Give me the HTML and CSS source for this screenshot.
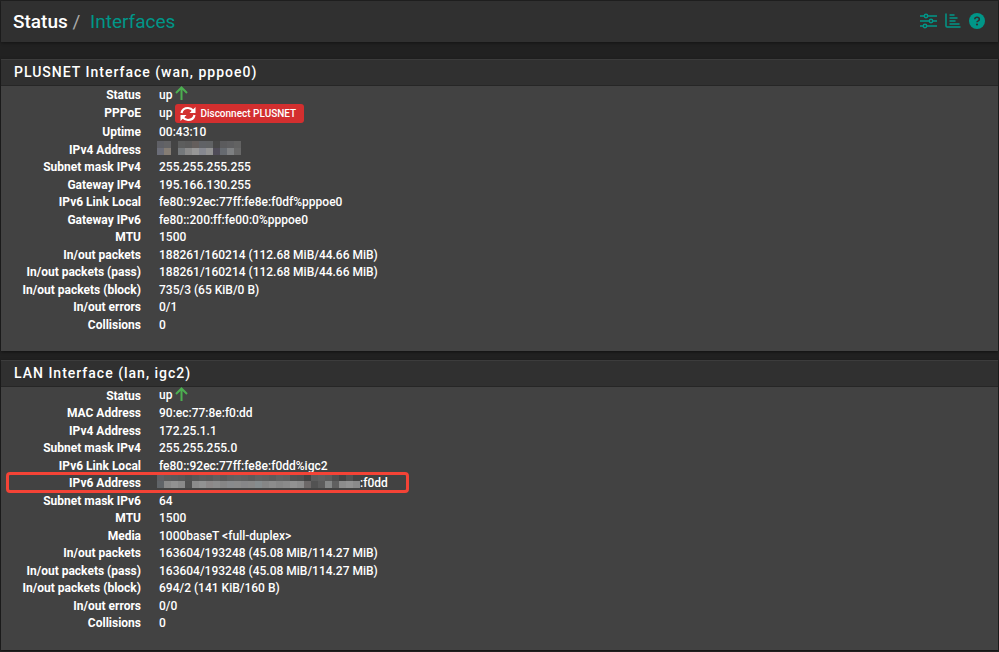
FILE: index.html
```
<!DOCTYPE html>
<html lang="en">
<head>
    <meta charset="UTF-8">
    <meta name="viewport" content="width=device-width, initial-scale=1.0">
    <title>Status: Interfaces</title>
    <link rel="stylesheet" href="styles.css">
</head>
<body>
    <header class="header">
        <h1 class="breadcrumb">Status <span class="slash">/</span> <a href="#">Interfaces</a></h1>
        <nav class="header-icons">
            <a href="#" aria-label="Settings">
                <svg width="17" height="16" viewBox="0 0 17 16" fill="none" stroke="currentColor" stroke-width="1.5">
                    <path d="M0 3h4M8 3h9M0 8h9M13 8h4M0 13h3M7 13h10"/>
                    <circle cx="6" cy="3" r="1.7"/>
                    <circle cx="11" cy="8" r="1.7"/>
                    <circle cx="5" cy="13" r="1.7"/>
                </svg>
            </a>
            <a href="#" aria-label="Graph">
                <svg width="16" height="16" viewBox="0 0 16 16" fill="none" stroke="currentColor" stroke-width="1.5" stroke-linecap="round">
                    <path d="M1 1v12q0 1 1 1h13M5 2h4M5 5h7M5 8h5M5 11h9"/>
                </svg>
            </a>
            <a href="#" aria-label="Help">
                <svg width="16" height="16" viewBox="0 0 16 16">
                    <circle cx="8" cy="8" r="8" fill="currentColor"/>
                    <path d="M5.8 6.2Q5.9 4.3 8 4.3Q10.3 4.3 10.3 6.2Q10.3 7.3 9.1 7.9Q8 8.4 8 9.3" fill="none" stroke="#303030" stroke-width="1.6"/>
                    <circle cx="8" cy="11.5" r="1.1" fill="#303030"/>
                </svg>
            </a>
        </nav>
    </header>

    <section class="panel">
        <h2 class="panel-heading">PLUSNET Interface (wan, pppoe0)</h2>
        <dl class="info info-wan">
            <dt>Status</dt>
            <dd class="up">up
                <svg class="arrow" width="13" height="14" viewBox="0 0 13 14"><path d="M6.500 14V1.500M1 7L6.500 1.500L12 7"/></svg>
            </dd>
            <dt>PPPoE</dt>
            <dd class="up">up
                <button type="button" class="btn-danger">
                    <svg width="16" height="16" viewBox="0 0 16 16" fill="none" stroke="#fff" stroke-width="2.2">
                        <path d="M1.500 7Q2.500 2 8 2Q11 2 13.500 5M14.500 9Q13.500 14 8 14Q5 14 2.500 11"/>
                        <path d="M15.500 1v6h-6zM.5 15V9h6z" fill="#fff" stroke="none"/>
                    </svg>
                    Disconnect PLUSNET
                </button>
            </dd>
            <dt>Uptime</dt>
            <dd>00:43:10</dd>
            <dt>IPv4 Address</dt>
            <dd><span class="mosaic" data-cells="5f6066 636365 444444 5c5d5d 5a5a5a 645e5c 606266 606264 474747 5b5b5d 5e5e60 626262|6b6d78 857d74 444444 74787b 8a8a8a 979797 868890 929292 4f4c58 666a70 7e8082 686868"></span></dd>
            <dt>Subnet mask IPv4</dt>
            <dd>255.255.255.255</dd>
            <dt>Gateway IPv4</dt>
            <dd>195.166.130.255</dd>
            <dt>IPv6 Link Local</dt>
            <dd>fe80::92ec:77ff:fe8e:f0df%pppoe0</dd>
            <dt>Gateway IPv6</dt>
            <dd>fe80::200:ff:fe00:0%pppoe0</dd>
            <dt>MTU</dt>
            <dd>1500</dd>
            <dt>In/out packets</dt>
            <dd>188261/160214 (112.68 MiB/44.66 MiB)</dd>
            <dt>In/out packets (pass)</dt>
            <dd>188261/160214 (112.68 MiB/44.66 MiB)</dd>
            <dt>In/out packets (block)</dt>
            <dd>735/3 (65 KiB/0 B)</dd>
            <dt>In/out errors</dt>
            <dd>0/1</dd>
            <dt>Collisions</dt>
            <dd>0</dd>
        </dl>
    </section>

    <section class="panel">
        <h2 class="panel-heading">LAN Interface (lan, igc2)</h2>
        <dl class="info">
            <dt>Status</dt>
            <dd class="up">up
                <svg class="arrow" width="13" height="14" viewBox="0 0 13 14"><path d="M6.500 14V1.500M1 7L6.500 1.500L12 7"/></svg>
            </dd>
            <dt>MAC Address</dt>
            <dd>90:ec:77:8e:f0:dd</dd>
            <dt>IPv4 Address</dt>
            <dd>172.25.1.1</dd>
            <dt>Subnet mask IPv4</dt>
            <dd>255.255.255.0</dd>
            <dt>IPv6 Link Local</dt>
            <dd>fe80::92ec:77ff:fe8e:f0dd%igc2</dd>
            <dt class="marked">IPv6 Address</dt>
            <dd><span class="mosaic" data-cells="606064 5c5c5c 5a5a5c 585858 525252 585858 5c5c5c 5a5a5a 606060 5a5a5a 606060 626262 606060 5c5c5c 626262 606060 5c5c5c 626262 606060 525252 505050 444444 5c5c5c 606060 5c5c5c 505050 444444 525252 444444|606468 8a8a8a 929292 8a8a8a 505050 8c8c8c 929292 8c8888 8c8c8c 868686 888a8c 8a8a8a 868688 888888 868c8e 868686 8c8c8c 868686 8a8a8a 929292 8c8c8c 6c6868 525252 5c5c5c 868888 606060 8c8c8c 929292 8a8a8a"></span>:f0dd</dd>
            <dt>Subnet mask IPv6</dt>
            <dd>64</dd>
            <dt>MTU</dt>
            <dd>1500</dd>
            <dt>Media</dt>
            <dd>1000baseT &lt;full-duplex&gt;</dd>
            <dt>In/out packets</dt>
            <dd>163604/193248 (45.08 MiB/114.27 MiB)</dd>
            <dt>In/out packets (pass)</dt>
            <dd>163604/193248 (45.08 MiB/114.27 MiB)</dd>
            <dt>In/out packets (block)</dt>
            <dd>694/2 (141 KiB/160 B)</dd>
            <dt>In/out errors</dt>
            <dd>0/0</dd>
            <dt>Collisions</dt>
            <dd>0</dd>
        </dl>
    </section>

    <script>
        // Build the blocks that hide the private addresses
        document.querySelectorAll('.mosaic').forEach(mosaic => {
            const rows = mosaic.dataset.cells.split('|').map(row => row.split(' '));
            mosaic.style.gridTemplateColumns = `repeat(${rows[0].length}, 7px)`;
            rows.flat().forEach(color => {
                const cell = document.createElement('i');
                cell.style.background = `#${color}`;
                mosaic.appendChild(cell);
            });
        });
    </script>
</body>
</html>
```
FILE: styles.css
```
body {
    margin: 0;
    padding: 1px;
    background: #212121;
    color: #fff;
    font-family: Roboto, sans-serif;
    font-size: 12px;
    font-weight: 500;
}
a {
    color: #009688;
    text-decoration: none;
}
.header {
    display: flex;
    align-items: center;
    justify-content: space-between;
    height: 41px;
    padding: 0 13px 0 12px;
    background: #303030;
    box-shadow: 0 1px 3px rgba(0, 0, 0, 0.4);
}
.breadcrumb {
    margin: 0;
    font-size: 19px;
    font-weight: 500;
}
.breadcrumb a {
    font-weight: 400;
}
.slash {
    margin-right: 5px;
    color: #aaa;
    font-weight: 400;
}
.header-icons {
    display: flex;
    gap: 8px;
    padding-bottom: 1px;
}
.header-icons a, .header-icons svg {
    display: block;
}
.panel {
    margin-top: 17px;
    border-top: 1px solid #3c3c3c;
    background: #424242;
    box-shadow: 0 1px 3px rgba(0, 0, 0, 0.5);
}
.panel + .panel {
    margin-top: 9px;
}
.panel-heading {
    margin: 0;
    padding: 0 13px;
    border-bottom: 1px solid #262626;
    background: #303030;
    font-size: 14px;
    font-weight: 500;
    line-height: 25px;
    letter-spacing: 1px;
}
.info {
    display: grid;
    grid-template-columns: 140px 1fr;
    grid-template-rows: 17px;
    grid-auto-rows: 18px 17px;
    column-gap: 18px;
    margin: 0;
    padding-bottom: 18px;
    line-height: 19px;
}
.info-wan {
    grid-template-rows: 18px 19px;
}
.info dt {
    font-weight: 700;
    text-align: right;
}
.info dd {
    margin: 0;
}
.info .up {
    display: flex;
    align-items: center;
    gap: 3px;
}
.info .arrow {
    align-self: flex-start;
    fill: none;
    stroke: #4caf50;
    stroke-width: 2;
}
.btn-danger {
    display: flex;
    align-items: center;
    gap: 4px;
    height: 19px;
    padding: 0 8px 0 5px;
    border: none;
    border-radius: 3px;
    background: #d32f2f;
    color: #fff;
    font-family: inherit;
    font-size: 10px;
    font-weight: 500;
    cursor: pointer;
}
.mosaic {
    display: inline-grid;
    grid-auto-rows: 7px;
    margin-left: -2px;
    vertical-align: top;
}
/* Red frame round the address row */
.marked {
    position: relative;
}
.marked::after {
    content: "";
    position: absolute;
    top: -2px;
    left: 5px;
    width: 397px;
    height: 15px;
    border: 3px solid #f44336;
    border-radius: 4px;
}
```
